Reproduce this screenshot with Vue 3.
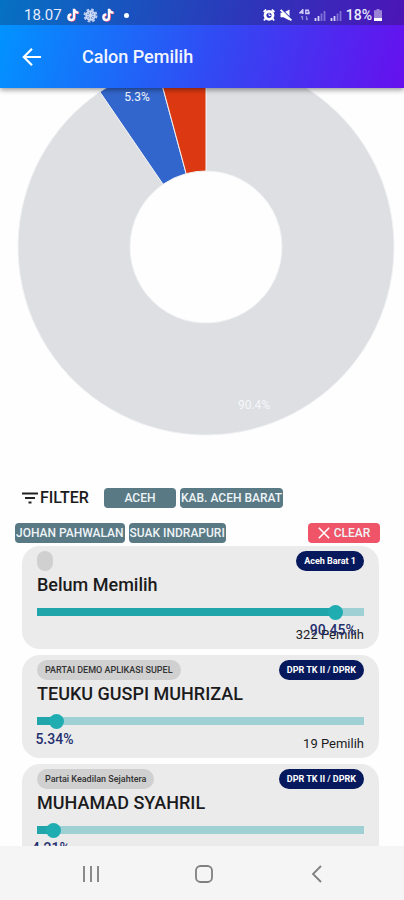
<script setup>
import { computed, ref } from 'vue'

const regions = ['ACEH', 'KAB. ACEH BARAT']
const areas = ['JOHAN PAHWALAN', 'SUAK INDRAPURI']

const candidates = ref([
  { id: 1, party: '', name: 'Belum Memilih', level: 'Aceh Barat 1', percent: 90.45, voters: 322 },
  { id: 2, party: 'PARTAI DEMO APLIKASI SUPEL', name: 'TEUKU GUSPI MUHRIZAL', level: 'DPR TK II / DPRK', percent: 5.34, voters: 19 },
  { id: 3, party: 'Partai Keadilan Sejahtera', name: 'MUHAMAD SYAHRIL', level: 'DPR TK II / DPRK', percent: 4.21, voters: 15 }
])

const colors = ['#dddfe2', '#3366cc', '#dc3912']
const cx = 206
const cy = 247
const outer = 188
const inner = 76

function point(radius, share) {
  const a = share * Math.PI * 2
  return `${cx + radius * Math.sin(a)} ${cy - radius * Math.cos(a)}`
}

const slices = computed(() => {
  let start = 0
  return candidates.value.map((c, i) => {
    const share = c.percent / 100
    const end = start + share
    const large = share > 0.5 ? 1 : 0
    const d = `M${point(outer, start)} A${outer} ${outer} 0 ${large} 1 ${point(outer, end)} L${point(inner, end)} A${inner} ${inner} 0 ${large} 0 ${point(inner, start)}Z`
    start = end
    return { id: c.id, d, color: colors[i] }
  })
})
</script>

<template>
  <div class="screen">
    <header class="header">
      <div class="status-bar">
        <span class="clock">18.07</span>
        <svg width="13" height="14" viewBox="0 0 13 14">
          <path d="M7 .8v8.4a2.8 2.8 0 1 1-2.8-2.8M7 .8c.2 2.2 1.8 3.6 4.4 3.8" fill="none" stroke="#e8507a" stroke-width="2.4" transform="translate(.8 .5)" />
          <path d="M7 .8v8.4a2.8 2.8 0 1 1-2.8-2.8M7 .8c.2 2.2 1.8 3.6 4.4 3.8" fill="none" stroke="#fff" stroke-width="2.4" />
        </svg>
        <svg class="gear" width="15" height="15" viewBox="0 0 15 15">
          <circle cx="7.5" cy="7.5" r="6" fill="none" stroke="#b9cbf0" stroke-width="2" stroke-dasharray="2.7 2" />
          <circle cx="7.5" cy="7.5" r="4.4" fill="#7fa0dd" stroke="#cddaf5" stroke-width="1.8" />
          <path d="M7.5 4v7M4 7.5h7M5 5l5 5M10 5l-5 5" stroke="#cddaf5" />
        </svg>
        <svg width="13" height="14" viewBox="0 0 13 14">
          <path d="M7 .8v8.4a2.8 2.8 0 1 1-2.8-2.8M7 .8c.2 2.2 1.8 3.6 4.4 3.8" fill="none" stroke="#e8507a" stroke-width="2.4" transform="translate(.8 .5)" />
          <path d="M7 .8v8.4a2.8 2.8 0 1 1-2.8-2.8M7 .8c.2 2.2 1.8 3.6 4.4 3.8" fill="none" stroke="#fff" stroke-width="2.4" />
        </svg>
        <span class="dot"></span>
        <span class="spacer"></span>
        <svg width="12" height="12" viewBox="0 0 12 12">
          <path d="M.6 3 3.2.6M11.4 3 8.8.6M2.3 9.5 1 11.5M9.7 9.5l1.3 2" stroke="#fff" stroke-width="1.8" />
          <circle cx="6" cy="6.3" r="4" fill="none" stroke="#fff" stroke-width="2.8" />
          <path d="M6 4.2v2.3h1.8" fill="none" stroke="#fff" />
        </svg>
        <svg class="mute" width="12" height="12" viewBox="0 0 12 12">
          <path d="M.5 3.8h3L9.5.5v11L3.5 8.2h-3z" fill="#fff" />
          <path d="m1.8.6 10 9.8" stroke="#3040b0" stroke-width="1.6" />
          <path d="m.6.8 10.8 10.6" stroke="#fff" stroke-width="1.8" />
        </svg>
        <svg class="network" width="11" height="12" viewBox="0 0 11 12">
          <path d="M3.8 5V.7L1 3.7h3.6M10 1.2H6.8v3.3H10V3H8.6" fill="none" stroke="#d0ceF4" stroke-width="1.4" />
          <path d="M3.5 11V7M2 8.5 3.5 7M7.5 7v4M9 9.5 7.5 11" fill="none" stroke="#8c86d8" stroke-width="1.2" />
        </svg>
        <svg v-for="n in 2" :key="n" class="signal" width="12" height="11" viewBox="0 0 12 11">
          <path d="M1.5 11V8M4.5 11V6" stroke="#d5d3f5" stroke-width="1.8" />
          <path d="M7.5 11V3.5M10.5 11V1" stroke="#7e72d6" stroke-width="1.8" />
        </svg>
        <span class="battery-text">18%</span>
        <svg width="8" height="12" viewBox="0 0 8 12">
          <path d="M2.5 0h3v1.2H8V12H0V1.2h2.5z" fill="#9b83d8" />
          <path d="M0 9h8v3H0z" fill="#fff" />
        </svg>
      </div>
      <div class="app-bar">
        <button class="back" aria-label="Kembali">
          <svg width="20" height="20" viewBox="0 0 20 20">
            <path d="M10 1.8 1.8 10l8.2 8.2M1.8 10H19" fill="none" stroke="#fff" stroke-width="2.2" />
          </svg>
        </button>
        <h1>Calon Pemilih</h1>
      </div>
    </header>

    <main class="content">
      <svg class="chart" viewBox="0 88 404 360">
        <path v-for="s in slices" :key="s.id" :d="s.d" :fill="s.color" stroke="#f1f2f4" stroke-width="1" />
        <text x="137" y="101" text-anchor="middle">5.3%</text>
        <text x="254" y="409" text-anchor="middle">90.4%</text>
      </svg>

      <section class="filters">
        <div class="filter-row first">
          <div class="filter-title">
            <svg width="16" height="12" viewBox="0 0 16 12">
              <path d="M0 1.5h16M3 6h10M6.5 10.5h3" stroke="#222" stroke-width="1.8" />
            </svg>
            <span>FILTER</span>
          </div>
          <button v-for="r in regions" :key="r" class="chip">{{ r }}</button>
        </div>
        <div class="filter-row">
          <button v-for="a in areas" :key="a" class="chip">{{ a }}</button>
          <button class="chip clear">
            <svg width="12" height="12" viewBox="0 0 12 12">
              <path d="m.8.8 10.4 10.4M11.2.8.8 11.2" stroke="#fff" stroke-width="1.6" />
            </svg>
            CLEAR
          </button>
        </div>
      </section>

      <section class="cards">
        <article v-for="c in candidates" :key="c.id" class="card">
          <div class="card-top">
            <span class="party">{{ c.party }}</span>
            <span class="level">{{ c.level }}</span>
          </div>
          <label class="name" :for="'share-' + c.id">{{ c.name }}</label>
          <div class="slider" :style="{ '--value': c.percent + '%' }">
            <div class="fill"></div>
            <input :id="'share-' + c.id" v-model.number="c.percent" type="range" min="0" max="100" step="0.01" />
            <output class="percent" :for="'share-' + c.id">{{ c.percent.toFixed(2) }}%</output>
          </div>
          <div class="voters">{{ c.voters }} Pemilih</div>
        </article>
      </section>
    </main>

    <nav class="nav-bar">
      <button aria-label="Aplikasi terbaru">
        <svg width="18" height="18" viewBox="0 0 18 18">
          <path d="M2 1v16M9 1v16M16 1v16" stroke="#8a8a8a" stroke-width="2" />
        </svg>
      </button>
      <button aria-label="Beranda">
        <svg width="18" height="18" viewBox="0 0 18 18">
          <rect x="1" y="1" width="16" height="16" rx="4.5" fill="none" stroke="#808080" stroke-width="1.8" />
        </svg>
      </button>
      <button aria-label="Kembali">
        <svg width="18" height="18" viewBox="0 0 18 18">
          <path d="M13 1 5 9l8 8" fill="none" stroke="#808080" stroke-width="1.8" />
        </svg>
      </button>
    </nav>
  </div>
</template>

<style>
body {
  margin: 0;
  background: #fff;
}
</style>

<style scoped>
.screen {
  display: flex;
  flex-direction: column;
  height: 100vh;
  overflow: hidden;
  background: #fefefe;
  font-family: Roboto, "Liberation Sans", sans-serif;
  color: #1b1b1d;
}
button {
  font-family: inherit;
  border: 0;
  padding: 0;
  background: none;
  cursor: pointer;
}
svg {
  flex: none;
}

/* Header */
.header {
  position: relative;
  z-index: 1;
  flex: none;
  background: linear-gradient(105deg, #0095ff 0%, #3348f3 55%, #6610ee 100%);
  box-shadow: 0 2px 5px rgba(0, 0, 0, 0.4);
}
.status-bar {
  display: flex;
  align-items: center;
  box-sizing: border-box;
  height: 25px;
  padding: 5px 22px 0 24px;
  background: rgba(20, 20, 40, 0.28);
  color: #e6ecfb;
}
.clock {
  margin-right: 5px;
  font-size: 15px;
  line-height: 20px;
}
.gear {
  margin: 0 4px 0 3px;
}
.dot {
  width: 5px;
  height: 5px;
  margin-left: 9px;
  border-radius: 50%;
  background: #fff;
}
.spacer {
  flex: 1;
}
.mute {
  margin-left: 5px;
}
.network {
  margin-left: 7px;
}
.signal {
  margin-left: 4px;
}
.battery-text {
  margin: 0 2px 0 4px;
  font-size: 14px;
  font-weight: 500;
}
.app-bar {
  display: flex;
  align-items: center;
  height: 63px;
  padding: 0 22px;
}
.back {
  display: flex;
  width: 60px;
}
h1 {
  margin: 0;
  color: #f2f5ff;
  font-size: 18px;
  font-weight: 500;
}

/* Content */
.content {
  flex: 1;
  min-height: 0;
  overflow: hidden;
}
.chart {
  display: block;
  width: 100%;
}
.chart text {
  fill: #f5f7fb;
  font-size: 12px;
}
.filters {
  display: flex;
  flex-direction: column;
  gap: 15px;
  padding: 40px 24px 0 15px;
}
.filter-row {
  display: flex;
  gap: 4px;
}
.filter-row.first {
  padding-left: 7px;
}
.filter-title {
  display: flex;
  align-items: center;
  gap: 2px;
  width: 78px;
  font-size: 16px;
  font-weight: 500;
  line-height: 20px;
}
.chip {
  box-sizing: border-box;
  min-width: 72px;
  height: 20px;
  padding: 0 1px;
  border-radius: 4px;
  background: #597985;
  color: #eef4f6;
  font-size: 12px;
  font-weight: 500;
  line-height: 20px;
  white-space: nowrap;
}
.clear {
  display: flex;
  align-items: center;
  justify-content: center;
  gap: 4px;
  margin-left: auto;
  background: #ef5468;
}

/* Cards */
.cards {
  display: flex;
  flex-direction: column;
  gap: 6px;
  padding: 3px 25px 0 22px;
}
.card {
  padding: 5px 15px 6px;
  border-radius: 18px;
  background: #ebebeb;
}
.card-top {
  display: flex;
  justify-content: space-between;
}
.party,
.level {
  height: 20px;
  padding: 0 8px;
  border-radius: 10px;
  font-size: 9px;
  line-height: 20px;
}
.party {
  background: #d0d0d0;
  color: #333;
  font-weight: 500;
}
.level {
  background: #06195c;
  color: #fff;
  font-weight: 700;
}
.name {
  display: block;
  padding: 3px 0;
  font-size: 18px;
  font-weight: 500;
  line-height: 22px;
}
.slider {
  position: relative;
  height: 8px;
  margin-top: 9px;
  background: #9fd1d4;
}
.fill {
  width: var(--value);
  height: 8px;
  background: #20a5ab;
}
.slider input {
  position: absolute;
  top: -4px;
  left: -5px;
  width: calc(100% + 15px);
  height: 16px;
  margin: 0;
  appearance: none;
  background: transparent;
}
.slider input::-webkit-slider-thumb {
  appearance: none;
  width: 15px;
  height: 15px;
  border-radius: 50%;
  background: #20adb2;
}
.percent {
  position: absolute;
  top: 14px;
  left: var(--value);
  color: #25306f;
  font-size: 14px;
  font-weight: 500;
  line-height: 16px;
  transform: translateX(-50%);
}
.voters {
  margin-top: 11px;
  font-size: 13px;
  line-height: 16px;
  text-align: right;
}

/* System navigation */
.nav-bar {
  display: flex;
  flex: none;
  align-items: center;
  justify-content: center;
  gap: 65px;
  height: 54px;
  padding: 2px 0 0 4px;
  box-sizing: border-box;
  background: #f5f5f5;
}
.nav-bar button {
  display: flex;
  justify-content: center;
  width: 48px;
}
</style>
